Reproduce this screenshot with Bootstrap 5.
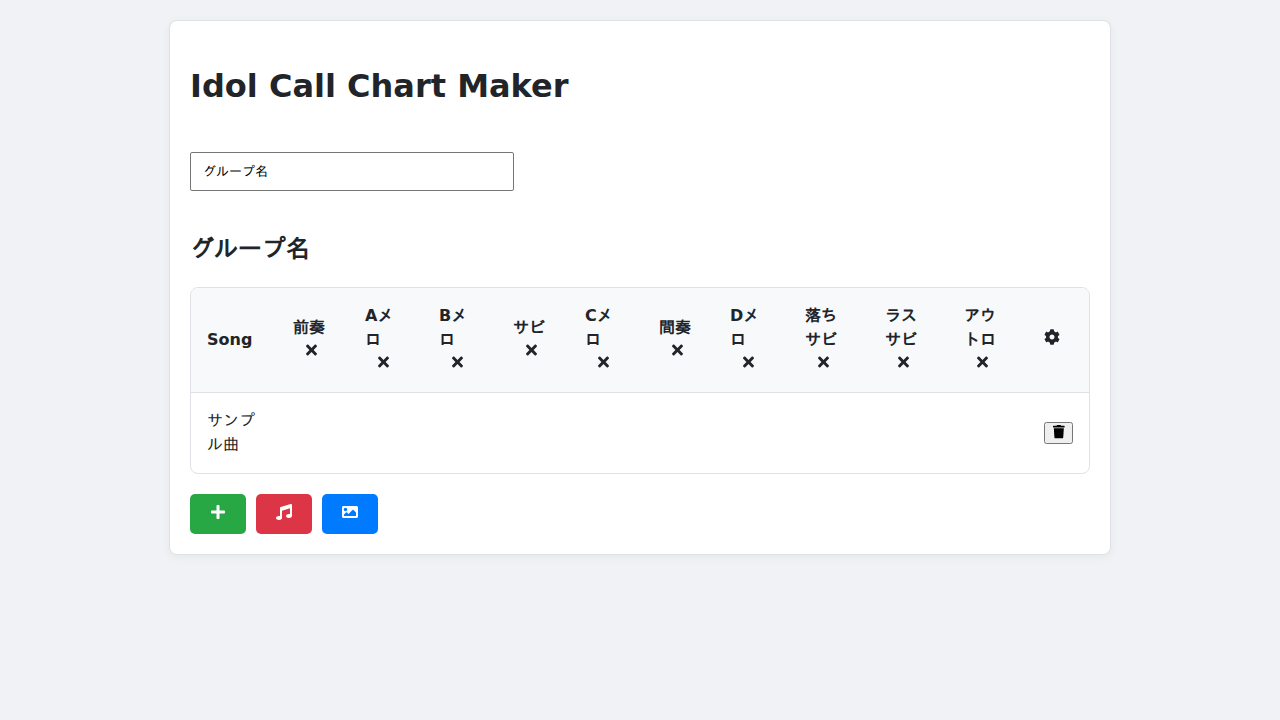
<!DOCTYPE html>
<html lang="ja">
<head>
<meta charset="utf-8">
<meta name="viewport" content="width=device-width, initial-scale=1">
<title>Idol Call Chart Maker</title>
<link rel="stylesheet" href="https://cdn.jsdelivr.net/npm/bootstrap@5.3.0/dist/css/bootstrap.min.css">
<style>
body{background:#f0f2f5;color:#212529;font-family:"DejaVu Sans","IPAGothic","IPAPGothic","TakaoGothic","VL Gothic","WenQuanYi Zen Hei","Noto Sans CJK JP",sans-serif;font-size:16px;line-height:24px}
.maker{width:942px;margin:20px auto;padding:20px;border:1px solid #dee2e6;border-radius:8px;box-shadow:0 2px 10px rgba(0,0,0,.05)}
.maker h1{font-size:32px;line-height:48px;font-weight:700;margin:21px 0 42px}
.group-input{display:block;width:324px;height:39px;padding:0 12px;border:1px solid #767676;border-radius:2px;font-family:"Liberation Sans","IPAGothic","IPAPGothic","TakaoGothic","VL Gothic","WenQuanYi Zen Hei","Noto Sans CJK JP",sans-serif;font-size:13px;line-height:normal;color:#000}
.maker h2{font-size:24px;line-height:36px;font-weight:700;margin:40px 0 20px}
.chart-box{border:1px solid #dee2e6;border-radius:8px;overflow:hidden}
.chart{table-layout:fixed;width:898px;margin:0;border-collapse:separate;border-spacing:0}
.chart th,.chart td{padding:16px 0 16px 16px;border:0;vertical-align:middle;line-height:24px;white-space:nowrap}
.chart th{height:105px;background:#f8f9fb;border-bottom:1px solid #dee2e6}
.chart td{height:80px}
.fa-svg{height:1em;vertical-align:-.125em;fill:currentColor;overflow:visible}
.cog{display:block;margin-top:-6px}
.remove{display:inline-block;padding-left:12.5px;height:24px;vertical-align:top;cursor:pointer}
.remove .fa-svg{vertical-align:top;margin-top:2px}
.trash-btn{display:block;width:29px;height:22px;padding:0 0 3px;border:1px solid #767676;border-radius:2.5px;background:#efefef;color:#000;font-size:13.333px;line-height:0}
.tool{width:56px;height:40px;padding:10px 0 0;border:0;border-radius:5px;line-height:0;color:#fff;display:flex;justify-content:center;align-items:flex-start}
.tool-add{background:#28a745}.tool-song{background:#dc3545}.tool-image{background:#007bff}
.tools{gap:10px;margin-top:20px}
</style>
</head>
<body>
<svg class="d-none" aria-hidden="true">
<symbol id="times" viewBox="0 0 352 512"><path d="M242.72 256l100.07-100.07c12.28-12.28 12.28-32.19 0-44.48l-22.24-22.24c-12.28-12.28-32.19-12.28-44.48 0L176 189.28 75.93 89.21c-12.28-12.28-32.19-12.28-44.48 0L9.21 111.45c-12.28 12.28-12.28 32.19 0 44.48L109.28 256 9.21 356.07c-12.28 12.28-12.28 32.19 0 44.48l22.24 22.24c12.28 12.28 32.2 12.28 44.48 0L176 322.72l100.07 100.07c12.28 12.28 32.2 12.28 44.48 0l22.24-22.24c12.28-12.28 12.28-32.19 0-44.48L242.72 256z"/></symbol>
</svg>
<main class="maker bg-white">
<h1>Idol Call Chart Maker</h1>
<input class="group-input" type="text" value="グループ名" aria-label="グループ名">
<h2>グループ名</h2>
<div class="chart-box">
<table class="table chart">
<colgroup><col style="width:86px"><col style="width:72px"><col style="width:74px"><col style="width:74px"><col style="width:72px"><col style="width:74px"><col style="width:71px"><col style="width:75px"><col style="width:80px"><col style="width:79px"><col style="width:80px"><col></colgroup>
<thead><tr>
<th>Song</th>
<th>前奏<br><span class="remove"><svg class="fa-svg" width="11" height="16"><use href="#times"/></svg></span></th>
<th>Aメ<br>ロ<br><span class="remove"><svg class="fa-svg" width="11" height="16"><use href="#times"/></svg></span></th>
<th>Bメ<br>ロ<br><span class="remove"><svg class="fa-svg" width="11" height="16"><use href="#times"/></svg></span></th>
<th>サビ<br><span class="remove"><svg class="fa-svg" width="11" height="16"><use href="#times"/></svg></span></th>
<th>Cメ<br>ロ<br><span class="remove"><svg class="fa-svg" width="11" height="16"><use href="#times"/></svg></span></th>
<th>間奏<br><span class="remove"><svg class="fa-svg" width="11" height="16"><use href="#times"/></svg></span></th>
<th>Dメ<br>ロ<br><span class="remove"><svg class="fa-svg" width="11" height="16"><use href="#times"/></svg></span></th>
<th>落ち<br>サビ<br><span class="remove"><svg class="fa-svg" width="11" height="16"><use href="#times"/></svg></span></th>
<th>ラス<br>サビ<br><span class="remove"><svg class="fa-svg" width="11" height="16"><use href="#times"/></svg></span></th>
<th>アウ<br>トロ<br><span class="remove"><svg class="fa-svg" width="11" height="16"><use href="#times"/></svg></span></th>
<th><svg class="fa-svg cog" width="16" height="16" viewBox="0 0 512 512"><path d="M487.4 315.7l-42.6-24.6c4.3-23.2 4.3-47 0-70.2l42.6-24.6c4.9-2.8 7.1-8.6 5.5-14-11.1-35.6-30-67.8-54.7-94.6-3.8-4.1-10-5.1-14.8-2.3L380.8 110c-17.9-15.4-38.5-27.3-60.8-35.1V25.8c0-5.6-3.9-10.5-9.4-11.7-36.7-8.2-74.3-7.8-109.2 0-5.5 1.2-9.4 6.1-9.4 11.7V75c-22.2 7.9-42.8 19.8-60.8 35.1L88.7 85.5c-4.9-2.8-11-1.9-14.8 2.3-24.7 26.7-43.6 58.9-54.7 94.6-1.7 5.4.6 11.2 5.5 14L67.3 221c-4.3 23.2-4.3 47 0 70.2l-42.6 24.6c-4.9 2.8-7.1 8.6-5.5 14 11.1 35.6 30 67.8 54.7 94.6 3.8 4.1 10 5.1 14.8 2.3l42.6-24.6c17.9 15.4 38.5 27.3 60.8 35.1v49.2c0 5.6 3.9 10.5 9.4 11.7 36.7 8.2 74.3 7.8 109.2 0 5.5-1.2 9.4-6.1 9.4-11.7v-49.2c22.2-7.9 42.8-19.8 60.8-35.1l42.6 24.6c4.9 2.8 11 1.9 14.8-2.3 24.7-26.7 43.6-58.9 54.7-94.6 1.5-5.5-.7-11.3-5.6-14.1zM256 336c-44.1 0-80-35.9-80-80s35.9-80 80-80 80 35.9 80 80-35.9 80-80 80z"/></svg></th>
</tr></thead>
<tbody><tr>
<td>サンプ<br>ル曲</td><td></td><td></td><td></td><td></td><td></td><td></td><td></td><td></td><td></td><td></td>
<td><button class="trash-btn" type="button" aria-label="削除"><svg class="fa-svg" viewBox="0 0 448 512"><path d="M432 32H312l-9.4-18.7A24 24 0 0 0 281.1 0H166.8a23.72 23.72 0 0 0-21.4 13.3L136 32H16A16 16 0 0 0 0 48v32a16 16 0 0 0 16 16h416a16 16 0 0 0 16-16V48a16 16 0 0 0-16-16zM53.2 467a48 48 0 0 0 47.9 45h245.8a48 48 0 0 0 47.9-45L416 128H32z"/></svg></button></td>
</tr></tbody>
</table>
</div>
<div class="tools d-flex">
<button class="tool tool-add" type="button" aria-label="追加"><svg class="fa-svg" width="14" height="16" viewBox="0 0 448 512"><path d="M416 208H272V64c0-17.67-14.33-32-32-32h-32c-17.67 0-32 14.33-32 32v144H32c-17.67 0-32 14.33-32 32v32c0 17.67 14.33 32 32 32h144v144c0 17.67 14.33 32 32 32h32c17.67 0 32-14.33 32-32V304h144c17.67 0 32-14.33 32-32v-32c0-17.67-14.33-32-32-32z"/></svg></button>
<button class="tool tool-song" type="button" aria-label="曲"><svg class="fa-svg" width="16" height="16" viewBox="0 0 512 512"><path d="M470.38 1.51L150.41 96A32 32 0 0 0 128 126.51v261.41A139 139 0 0 0 96 384c-53 0-96 28.66-96 64s43 64 96 64 96-28.66 96-64V214.32l256-75v184.61a138.4 138.4 0 0 0-32-3.93c-53 0-96 28.66-96 64s43 64 96 64 96-28.65 96-64V32a32 32 0 0 0-41.62-30.49z"/></svg></button>
<button class="tool tool-image" type="button" aria-label="画像"><svg class="fa-svg" width="16" height="16" viewBox="0 0 512 512"><path d="M464 448H48c-26.51 0-48-21.49-48-48V112c0-26.51 21.49-48 48-48h416c26.51 0 48 21.49 48 48v288c0 26.51-21.49 48-48 48zM112 120c-30.928 0-56 25.072-56 56s25.072 56 56 56 56-25.072 56-56-25.072-56-56-56zM64 384h384V272l-87.515-87.515c-4.686-4.686-12.284-4.686-16.971 0L208 320l-55.515-55.515c-4.686-4.686-12.284-4.686-16.971 0L64 336v48z"/></svg></button>
</div>
</main>
<script src="https://cdn.jsdelivr.net/npm/bootstrap@5.3.0/dist/js/bootstrap.bundle.min.js"></script>
</body>
</html>
